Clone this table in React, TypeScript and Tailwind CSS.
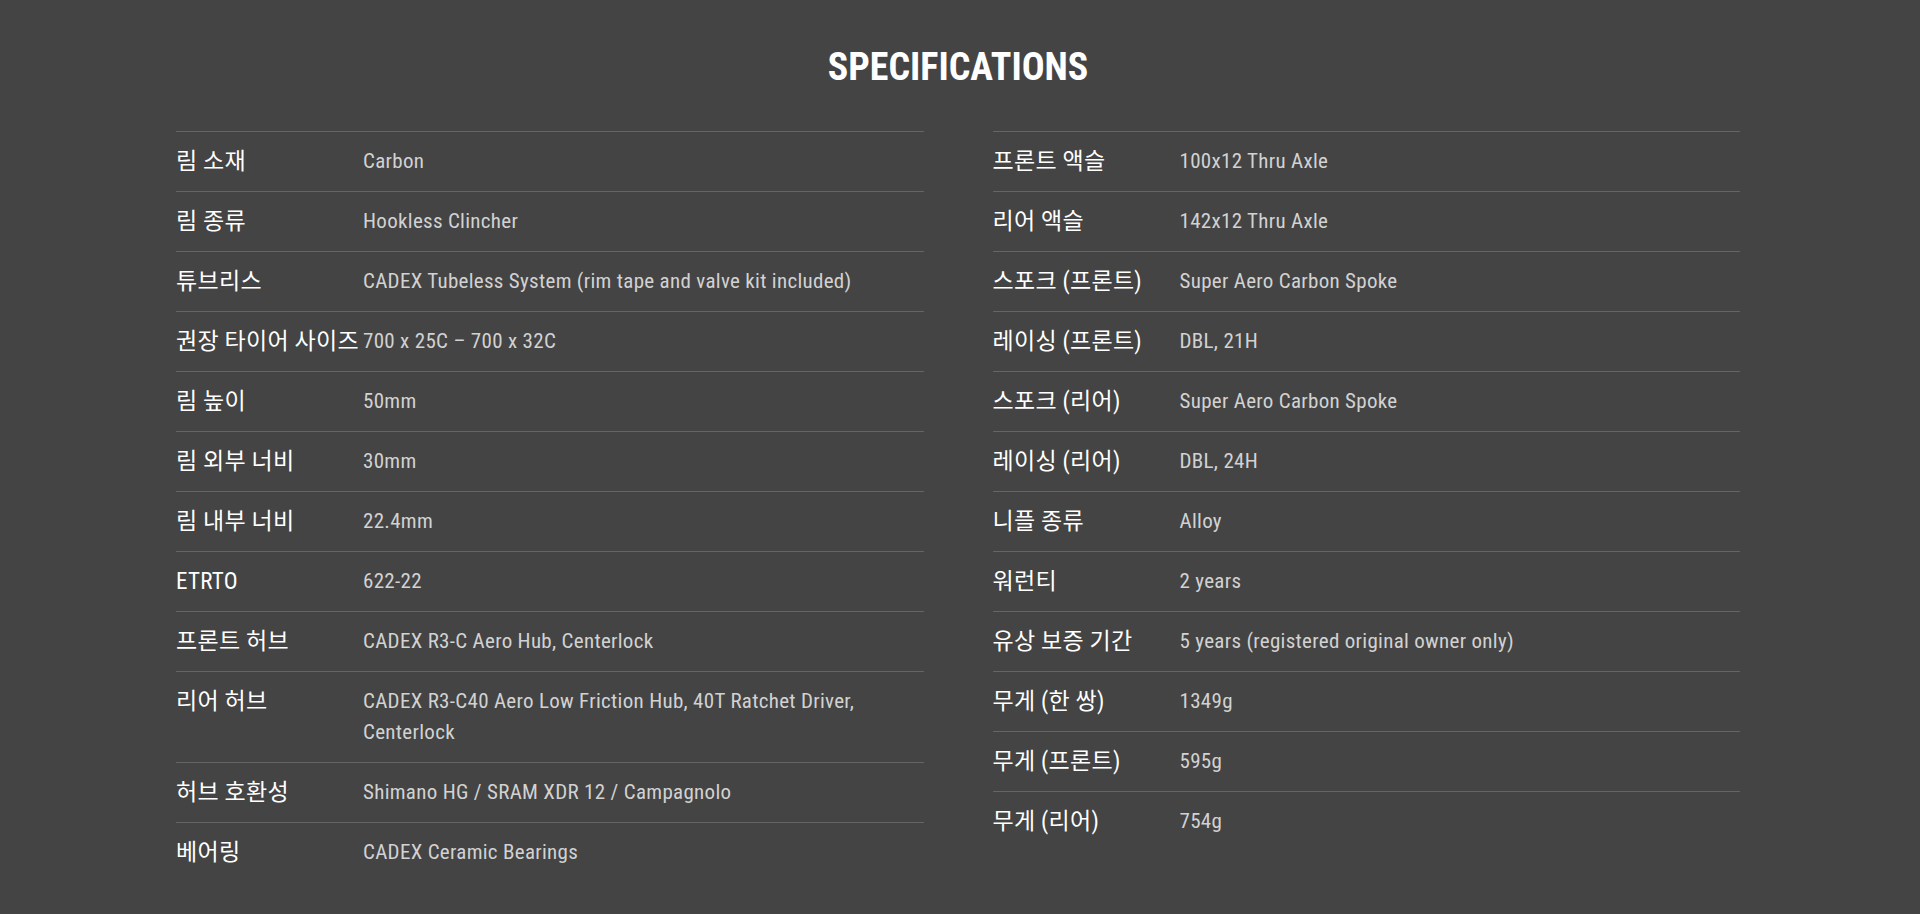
import React from "react";

const left: [string, string][] = [
  ["림 소재", "Carbon"],
  ["림 종류", "Hookless Clincher"],
  ["튜브리스", "CADEX Tubeless System (rim tape and valve kit included)"],
  ["권장 타이어 사이즈", "700 x 25C – 700 x 32C"],
  ["림 높이", "50mm"],
  ["림 외부 너비", "30mm"],
  ["림 내부 너비", "22.4mm"],
  ["ETRTO", "622-22"],
  ["프론트 허브", "CADEX R3-C Aero Hub, Centerlock"],
  ["리어 허브", "CADEX R3-C40 Aero Low Friction Hub, 40T Ratchet Driver, Centerlock"],
  ["허브 호환성", "Shimano HG / SRAM XDR 12 / Campagnolo"],
  ["베어링", "CADEX Ceramic Bearings"],
];

const right: [string, string][] = [
  ["프론트 액슬", "100x12 Thru Axle"],
  ["리어 액슬", "142x12 Thru Axle"],
  ["스포크 (프론트)", "Super Aero Carbon Spoke"],
  ["레이싱 (프론트)", "DBL, 21H"],
  ["스포크 (리어)", "Super Aero Carbon Spoke"],
  ["레이싱 (리어)", "DBL, 24H"],
  ["니플 종류", "Alloy"],
  ["워런티", "2 years"],
  ["유상 보증 기간", "5 years (registered original owner only)"],
  ["무게 (한 쌍)", "1349g"],
  ["무게 (프론트)", "595g"],
  ["무게 (리어)", "754g"],
];

function Table({ rows }: { rows: [string, string][] }) {
  return (
    <div className="flex flex-col">
      {rows.map(([k, v]) => (
        <div
          key={k}
          className="flex items-start border-t border-[#656565] py-[14px] leading-[31px]"
        >
          <div className="w-[187px] shrink-0 whitespace-nowrap text-[23px] tracking-[0.3px] text-white [font-family:'Roboto_Condensed','Noto_Sans_CJK_KR',sans-serif]">
            {k}
          </div>
          <div className="flex-1 pr-[8px] text-[21px] tracking-[0.3px] text-[#d2d2d2] [font-family:'Roboto_Condensed','Roboto','Noto_Sans_CJK_KR',sans-serif]">
            {v}
          </div>
        </div>
      ))}
    </div>
  );
}

export default function App() {
  return (
    <div className="min-h-[914px] w-full bg-[#444444] pt-[48px]">
      <div className="ml-[176px] w-[1564px]">
        <h2 className="text-center text-[38px] font-bold leading-none text-white [font-family:'Roboto_Condensed','Roboto',sans-serif]">
          SPECIFICATIONS
        </h2>
        <div className="mt-[45px] grid grid-cols-2 gap-x-[69px]">
          <Table rows={left} />
          <Table rows={right} />
        </div>
      </div>
    </div>
  );
}
